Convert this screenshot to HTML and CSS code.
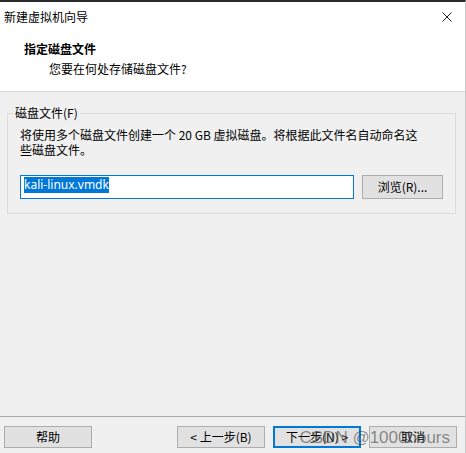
FILE: index.html
```html
<!DOCTYPE html>
<html lang="zh-CN">
<head>
<meta charset="utf-8">
<title>新建虚拟机向导</title>
<link rel="stylesheet" href="styles.css">
</head>
<body>
<div class="window">
  <div class="titlebar">
    <span class="title">新建虚拟机向导</span>
    <span class="close" aria-label="关闭">
      <svg width="10" height="10" viewBox="0 0 10 10"><path d="M0.5 0.5 L9.5 9.5 M9.5 0.5 L0.5 9.5" stroke="#222" stroke-width="1" fill="none"/></svg>
    </span>
  </div>
  <div class="header">
    <div class="h-title">指定磁盘文件</div>
    <div class="h-sub">您要在何处存储磁盘文件?</div>
  </div>
  <div class="content">
    <fieldset class="group">
      <legend class="legend">磁盘文件(F)</legend>
      <p class="desc">将使用多个磁盘文件创建一个 20 GB 虚拟磁盘。将根据此文件名自动命名这<br>些磁盘文件。</p>
      <div class="file-row">
        <div class="input"><span class="sel">kali-linux.vmdk</span></div>
        <button class="btn browse">浏览(R)...</button>
      </div>
    </fieldset>
  </div>
  <div class="footer">
    <button class="btn">帮助</button>
    <div class="right-btns">
      <button class="btn">&lt; 上一步(B)</button>
      <button class="btn default">下一步(N) &gt;</button>
      <button class="btn">取消</button>
    </div>
  </div>
  <div class="watermark">CSDN @1000hours</div>
</div>
</body>
</html>
```
FILE: styles.css
```css
* { box-sizing: border-box; }
html, body { margin: 0; padding: 0; }
body {
  width: 466px;
  height: 453px;
  overflow: hidden;
  background: #f0f0f0;
  font-family: "Noto Sans", "Noto Sans CJK SC", sans-serif;
  font-size: 12px;
  color: #000;
}
.window {
  position: relative;
  height: 453px;
  display: flex;
  flex-direction: column;
  border-top: 2px solid #2b2b2b;
  border-right: 1px solid #c9c9c9;
  background: #f0f0f0;
}
.titlebar {
  height: 29px;
  background: #fff;
  display: flex;
  align-items: center;
  justify-content: space-between;
  padding: 0 13px 0 4px;
}
.title { line-height: 14px; font-family: "Noto Sans CJK SC", sans-serif; }
.close { display: flex; width: 10px; height: 10px; }
.header {
  background: #fff;
  height: 61px;
  border-bottom: 1px solid #d8d8d8;
  padding: 10px 0 0 24px;
  font-family: "Noto Sans CJK SC", sans-serif;
}
.h-title { font-weight: bold; line-height: 16px; }
.h-sub { line-height: 16px; margin-top: 4px; padding-left: 25px; }
.content { flex: 1; padding: 13px 11px 0 7px; }
.group {
  margin: 0;
  border: 1px solid #dcdcdc;
  padding: 6px 12px 14px 12px;
}
.legend {
  margin-left: -7px;
  padding: 0 2px;
  line-height: 16px;
  font-family: "Noto Sans CJK SC", sans-serif;
}
.desc {
  margin: 0;
  line-height: 15px;
  font-family: "Noto Sans CJK SC", sans-serif;
}
.file-row {
  display: flex;
  gap: 8px;
  margin-top: 18px;
}
.input {
  width: 334px;
  height: 24px;
  background: #fff;
  border: 1px solid #0078d7;
  padding: 1px 0 0 3px;
  display: flex;
  align-items: flex-start;
}
.sel {
  background: #0078d7;
  color: #fff;
  line-height: 16px;
  font-size: 12px;
  font-family: "Noto Sans", sans-serif;
}
.btn {
  height: 22px;
  width: 88px;
  background: #e1e1e1;
  border: 1px solid #adadad;
  font-family: "Noto Sans CJK SC", sans-serif;
  font-size: 12px;
  color: #000;
  padding: 0;
  line-height: 18px;
}
.browse { width: 81px; height: 24px; }
.default { border-color: #0078d7; box-shadow: inset 0 0 0 1px #0078d7; }
.footer {
  border-top: 1px solid #a9a9a9;
  padding: 9px 8px 5px 4px;
  display: flex;
  justify-content: space-between;
}
.right-btns { display: flex; gap: 8px; }
.watermark {
  position: absolute;
  top: 427px;
  right: 15px;
  font-family: "Liberation Sans", sans-serif;
  font-size: 17px;
  line-height: 17px;
  color: rgba(70, 70, 70, 0.6);
  pointer-events: none;
  white-space: nowrap;
}
```
